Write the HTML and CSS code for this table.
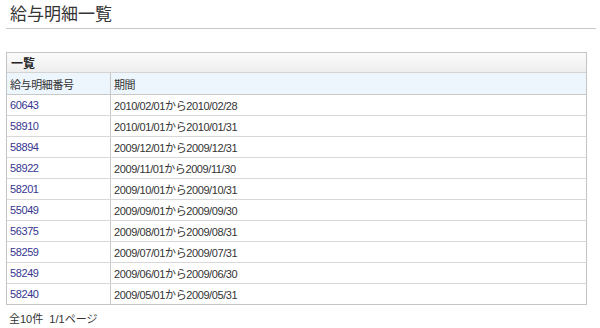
FILE: index.html
```html
<!DOCTYPE html>
<html lang="ja">
<head>
<meta charset="utf-8">
<title>給与明細一覧</title>
<link rel="stylesheet" href="styles.css">
</head>
<body>
<div class="page">
  <h1 class="title">給与明細一覧</h1>
  <div class="panel">
    <div class="panel-caption">一覧</div>
    <table class="list">
      <thead>
        <tr><th class="col-no">給与明細番号</th><th>期間</th></tr>
      </thead>
      <tbody>
        <tr><td><a href="#">60643</a></td><td>2010/02/01から2010/02/28</td></tr>
        <tr><td><a href="#">58910</a></td><td>2010/01/01から2010/01/31</td></tr>
        <tr><td><a href="#">58894</a></td><td>2009/12/01から2009/12/31</td></tr>
        <tr><td><a href="#">58922</a></td><td>2009/11/01から2009/11/30</td></tr>
        <tr><td><a href="#">58201</a></td><td>2009/10/01から2009/10/31</td></tr>
        <tr><td><a href="#">55049</a></td><td>2009/09/01から2009/09/30</td></tr>
        <tr><td><a href="#">56375</a></td><td>2009/08/01から2009/08/31</td></tr>
        <tr><td><a href="#">58259</a></td><td>2009/07/01から2009/07/31</td></tr>
        <tr><td><a href="#">58249</a></td><td>2009/06/01から2009/06/30</td></tr>
        <tr><td><a href="#">58240</a></td><td>2009/05/01から2009/05/31</td></tr>
      </tbody>
    </table>
  </div>
  <div class="summary">全10件&nbsp;&nbsp;1/1ページ</div>
</div>
</body>
</html>
```

FILE: styles.css
```css
html, body {
  margin: 0;
  padding: 0;
  background: #fff;
}
body {
  font-family: "Liberation Sans", "Noto Sans CJK JP", sans-serif;
  font-size: 11px;
  color: #333;
}
.page {
  padding: 0 4px 0 6px;
}
.title {
  margin: 0;
  padding: 2px 0 0 4px;
  box-sizing: border-box;
  height: 29px;
  font-family: "Noto Sans CJK JP", sans-serif;
  font-weight: normal;
  font-size: 17px;
  line-height: 22px;
  color: #333;
  border-bottom: 1px solid #c8c8c8;
}
.panel {
  margin-top: 23px;
  width: 581px;
  box-sizing: border-box;
  border: 1px solid #c4c4c4;
}
.panel-caption {
  height: 19px;
  line-height: 19px;
  padding-left: 4px;
  font-family: "Noto Sans CJK JP", sans-serif;
  font-weight: bold;
  font-size: 12px;
  color: #222;
  background: linear-gradient(#fbfbfb, #eeeeee);
  border-bottom: 1px solid #d4d4d4;
}
.list {
  width: 100%;
  border-collapse: collapse;
}
.list th,
.list td {
  height: 20px;
  padding: 0 3px;
  text-align: left;
  font-weight: normal;
  letter-spacing: -0.4px;
  white-space: nowrap;
  border-bottom: 1px solid #d8d8d8;
}
.list tbody tr:last-child td {
  border-bottom: none;
}
.list th {
  height: 21px;
  background: #edf6fd;
  border-bottom: 1px solid #c8c8c8;
  color: #333;
}
.list th.col-no,
.list td:first-child {
  width: 97px;
  border-right: 1px solid #c8c8c8;
}
.list a {
  color: #35358f;
  text-decoration: none;
}
.summary {
  padding: 8px 0 0 3px;
  line-height: 13px;
  color: #333;
}
```
